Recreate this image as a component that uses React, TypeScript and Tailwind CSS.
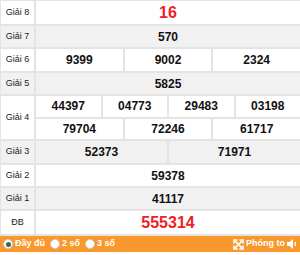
import type { ReactNode } from 'react';

const FONT = { fontFamily: '"Liberation Sans", Arial, sans-serif' };

function Row({ label, gray, h, children }: { label: string; gray?: boolean; h: string; children: ReactNode }) {
  return (
    <div className={`flex border-b-2 border-[#e4e4e4] ${gray ? 'bg-[#f1f1f1]' : 'bg-white'} ${h}`}>
      <div className="w-[35px] shrink-0 flex items-center justify-center border-r-2 border-[#e4e4e4] text-[9px] text-[#222]">
        {label}
      </div>
      <div className="flex-1 flex flex-col">{children}</div>
    </div>
  );
}

function Cells({ nums, last }: { nums: string[]; last?: boolean }) {
  return (
    <div className={`flex-1 flex ${last ? '' : 'border-b-2 border-[#e4e4e4]'}`}>
      {nums.map((n, i) => (
        <div
          key={i}
          className={`flex-1 flex items-center justify-center text-[12px] font-bold text-[#111] ${
            i < nums.length - 1 ? 'border-r-2 border-[#e4e4e4]' : ''
          }`}
        >
          {n}
        </div>
      ))}
    </div>
  );
}

function Radio({ on }: { on?: boolean }) {
  return (
    <span className="w-[10px] h-[10px] rounded-full bg-white border border-[#ccc] flex items-center justify-center">
      {on && <span className="w-[5px] h-[5px] rounded-full bg-[#3d6b3d]" />}
    </span>
  );
}

export default function App() {
  return (
    <div className="w-[300px] h-[255px] bg-white" style={FONT}>
      <div className="border-t border-l border-[#e4e4e4]">
        <Row label="Giải 8" h="h-[25px]">
          <div className="flex-1 flex items-center justify-center text-[16px] font-bold text-[#ee2124]">16</div>
        </Row>
        <Row label="Giải 7" gray h="h-[23px]">
          <Cells nums={['570']} last />
        </Row>
        <Row label="Giải 6" h="h-[24px]">
          <Cells nums={['9399', '9002', '2324']} last />
        </Row>
        <Row label="Giải 5" gray h="h-[23px]">
          <Cells nums={['5825']} last />
        </Row>
        <Row label="Giải 4" h="h-[45px]">
          <Cells nums={['44397', '04773', '29483', '03198']} />
          <Cells nums={['79704', '72246', '61717']} last />
        </Row>
        <Row label="Giải 3" gray h="h-[24px]">
          <Cells nums={['52373', '71971']} last />
        </Row>
        <Row label="Giải 2" h="h-[23px]">
          <Cells nums={['59378']} last />
        </Row>
        <Row label="Giải 1" gray h="h-[23px]">
          <Cells nums={['41117']} last />
        </Row>
        <Row label="ĐB" h="h-[25px]">
          <div className="flex-1 flex items-center justify-center text-[16px] font-bold text-[#ee2124]">555314</div>
        </Row>
      </div>
      <div className="h-[16px] bg-[#f8982d] flex items-center justify-between px-[3px] text-white text-[9px] font-bold">
        <div className="flex items-center gap-[2px]">
          <Radio on />
          <span className="mr-[3px]">Đầy đủ</span>
          <Radio />
          <span className="mr-[3px]">2 số</span>
          <Radio />
          <span>3 số</span>
        </div>
        <div className="flex items-center gap-[2px]">
          <svg width="11" height="11" viewBox="0 0 12 12" fill="none" stroke="white" strokeWidth="1.8">
            <path d="M2 2L10 10M10 2L2 10" />
            <path d="M1 5V1h4M11 5V1H7M1 7v4h4M11 7v4H7" strokeWidth="1.6" />
          </svg>
          <span>Phóng to</span>
          <svg width="10" height="10" viewBox="0 0 10 10" fill="white">
            <path d="M0 3h2.5L6 0v10L2.5 7H0z" />
            <rect x="7.5" y="3" width="1.4" height="4" />
          </svg>
        </div>
      </div>
    </div>
  );
}
